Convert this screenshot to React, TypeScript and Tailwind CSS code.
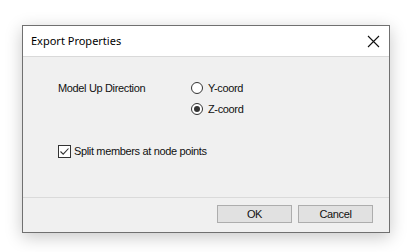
import React from 'react';

const Radio: React.FC<{ checked?: boolean; label: string }> = ({ checked, label }) => (
  <div className="flex items-center h-[20px]">
    <span className="w-[12px] h-[12px] rounded-full border border-[#333] bg-white flex items-center justify-center">
      {checked && <span className="w-[6px] h-[6px] rounded-full bg-[#333]" />}
    </span>
    <span className="ml-[5px]">{label}</span>
  </div>
);

const App: React.FC = () => {
  return (
    <div className="w-[412px] h-[252px] bg-white pt-[25px] pl-[22px] font-['Liberation_Sans',sans-serif] text-[11px] tracking-[-0.35px] text-[#111]">
      <div className="w-[368px] h-[208px] border border-[#707070] flex flex-col shadow-[0_4px_16px_rgba(0,0,0,0.22)]">
        <div className="h-[31px] bg-white border-b border-[#d9d9d9] flex items-center justify-between pl-[8px] pr-[9px]">
          <span className="font-['Noto_Sans',sans-serif] text-[11px] tracking-[0px] text-black">Export Properties</span>
          <svg width="13" height="13" viewBox="0 0 13 13">
            <path d="M1 1 L12 12 M12 1 L1 12" stroke="#111" strokeWidth="1.1" />
          </svg>
        </div>
        <div className="flex-1 bg-[#f0f0f0] pl-[35px] pt-[21px]">
          <div className="flex">
            <div className="w-[133px] h-[20px] flex items-center">Model Up Direction</div>
            <div className="flex flex-col gap-[1px]">
              <Radio label="Y-coord" />
              <Radio checked label="Z-coord" />
            </div>
          </div>
          <div className="flex items-center mt-[24px]">
            <span className="w-[13px] h-[13px] border border-[#333] bg-white flex items-center justify-center">
              <svg width="11" height="11" viewBox="0 0 11 11">
                <path d="M1.5 5.5 L4.2 8.2 L9.5 2.5" fill="none" stroke="#333" strokeWidth="1.1" />
              </svg>
            </span>
            <span className="ml-[3px]">Split members at node points</span>
          </div>
        </div>
        <div className="h-[35px] bg-[#f0f0f0] border-t border-[#dadada] flex justify-end gap-[6px] pt-[7px] pr-[16px]">
          <button className="w-[75px] h-[18px] bg-[#e1e1e1] border border-[#adadad] text-[11px] leading-none">OK</button>
          <button className="w-[75px] h-[18px] bg-[#e1e1e1] border border-[#adadad] text-[11px] leading-none">Cancel</button>
        </div>
      </div>
    </div>
  );
};

export default App;
